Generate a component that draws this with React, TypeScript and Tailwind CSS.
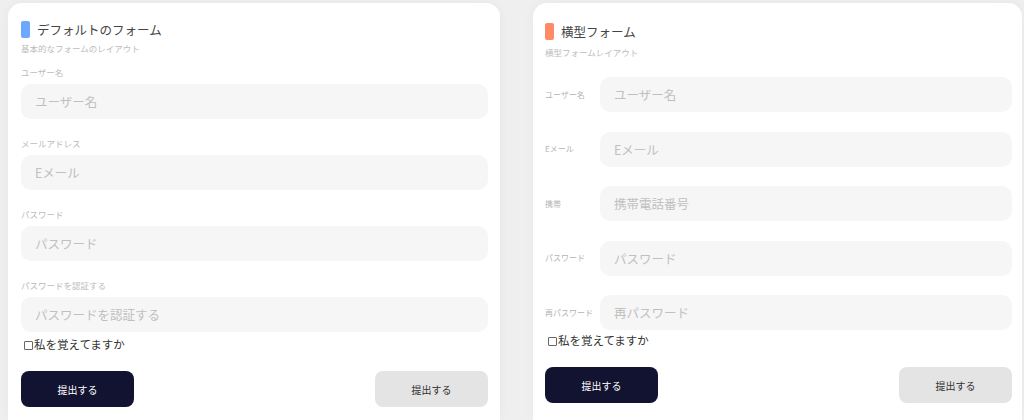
const font = { fontFamily: '"Noto Sans CJK JP", "Noto Sans", sans-serif' };

const basicFields = [
    { label: 'ユーザー名', placeholder: 'ユーザー名' },
    { label: 'メールアドレス', placeholder: 'Eメール' },
    { label: 'パスワード', placeholder: 'パスワード' },
    { label: 'パスワードを認証する', placeholder: 'パスワードを認証する' },
];

const rowFields = [
    { label: 'ユーザー名', placeholder: 'ユーザー名' },
    { label: 'Eメール', placeholder: 'Eメール' },
    { label: '携帯', placeholder: '携帯電話番号' },
    { label: 'パスワード', placeholder: 'パスワード' },
    { label: '再パスワード', placeholder: '再パスワード' },
];

function CardHeader({ color, title, subtitle, gap }: { color: string; title: string; subtitle: string; gap: string }) {
    return (
        <>
            <div className="flex h-[17px] items-center gap-[7px]">
                <span className={`h-[17px] w-[9px] rounded-[2px] ${color}`} />
                <span className="text-[12.5px] leading-[17px] text-[#444]">{title}</span>
            </div>
            <p className={`text-[8.5px] leading-[12px] text-[#bcbcbc] ${gap}`}>{subtitle}</p>
        </>
    );
}

function Input({ placeholder }: { placeholder: string }) {
    return (
        <input
            placeholder={placeholder}
            className="h-[35px] w-full rounded-[10px] bg-[#f6f6f6] px-[14px] text-[12.5px] text-[#333] outline-none placeholder:text-[#c0c0c0]"
            style={font}
        />
    );
}

function Remember({ className }: { className: string }) {
    return (
        <label className={`flex h-[16px] items-center gap-[1px] text-[11.5px] text-[#333] ${className}`}>
            <span className="ml-[3px] h-[9px] w-[9px] rounded-[1px] border border-[#666]" />
            私を覚えてますか
        </label>
    );
}

function Buttons() {
    return (
        <div className="flex justify-between">
            <button className="h-[36px] w-[113px] rounded-[8px] bg-[#121331] text-[10px] text-white" style={font}>
                提出する
            </button>
            <button className="h-[36px] w-[113px] rounded-[8px] bg-[#e4e4e4] text-[10px] text-[#333]" style={font}>
                提出する
            </button>
        </div>
    );
}

export default function App() {
    return (
        <div className="flex h-[420px] gap-[33px] overflow-hidden bg-[#efefef] pl-2 pt-[3px]" style={font}>
            <div className="w-[492px] rounded-t-[14px] bg-white pl-[13px] pr-[12px] pt-[18px] shadow-[0_0_12px_rgba(0,0,0,0.04)]">
                <CardHeader color="bg-[#6ea8fe]" title="デフォルトのフォーム" subtitle="基本的なフォームのレイアウト" gap="mt-[4px]" />
                {basicFields.map((f, i) => (
                    <div key={f.label} className={i === 0 ? 'mt-[12px]' : 'mt-[18px]'}>
                        <div className="mb-[6px] text-[8.5px] leading-[12px] text-[#bcbcbc]">{f.label}</div>
                        <Input placeholder={f.placeholder} />
                    </div>
                ))}
                <Remember className="mt-[5px]" />
                <div className="mt-[18px]">
                    <Buttons />
                </div>
            </div>

            <div className="w-[489px] rounded-t-[14px] bg-white pl-[12px] pr-[10px] pt-[20px] shadow-[0_0_12px_rgba(0,0,0,0.04)]">
                <CardHeader color="bg-[#ff8a65]" title="横型フォーム" subtitle="横型フォームレイアウト" gap="mt-[6px]" />
                <div className="mt-[19px] flex flex-col gap-[19.5px]">
                    {rowFields.map((f) => (
                        <div key={f.label} className="flex items-center">
                            <div className="w-[55px] shrink-0 text-[8px] text-[#b4b4b4]">{f.label}</div>
                            <Input placeholder={f.placeholder} />
                        </div>
                    ))}
                </div>
                <Remember className="mt-[3px]" />
                <div className="mt-[18px]">
                    <Buttons />
                </div>
            </div>
        </div>
    );
}
